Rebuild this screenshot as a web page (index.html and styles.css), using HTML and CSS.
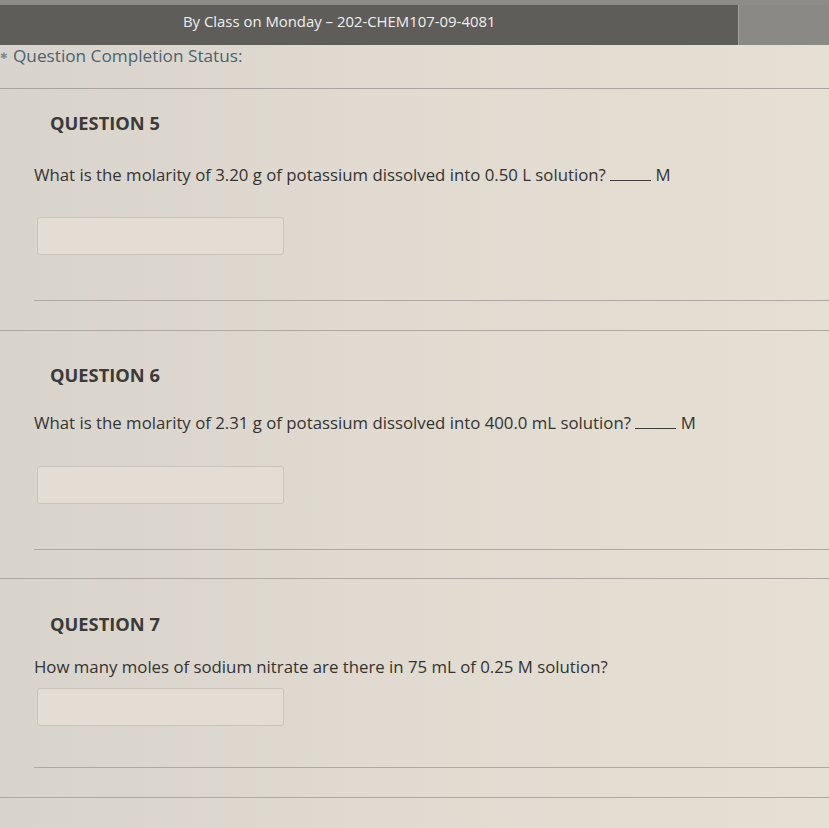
FILE: index.html
```html
<!DOCTYPE html>
<html>
<head>
<meta charset="utf-8">
<link rel="stylesheet" href="styles.css">
</head>
<body>
<div class="topstrip"></div>
<header class="bar">
  <div class="bar-main"><span class="bar-title">By Class on Monday – 202-CHEM107-09-4081</span></div>
  <div class="bar-side"></div>
</header>
<div class="status">
  <span class="status-icon">&#10033;</span>
  <span class="status-text">Question Completion Status:</span>
</div>
<main class="questions">
  <section class="question q5">
    <h2 class="q-title">QUESTION 5</h2>
    <p class="q-text">What is the molarity of 3.20 g of potassium dissolved into 0.50 L solution? <span class="blank"></span> M</p>
    <div class="answer"></div>
    <div class="inner-rule"></div>
  </section>
  <section class="question q6">
    <h2 class="q-title">QUESTION 6</h2>
    <p class="q-text">What is the molarity of 2.31 g of potassium dissolved into 400.0 mL solution? <span class="blank"></span> M</p>
    <div class="answer"></div>
    <div class="inner-rule"></div>
  </section>
  <section class="question q7">
    <h2 class="q-title">QUESTION 7</h2>
    <p class="q-text">How many moles of sodium nitrate are there in 75 mL of 0.25 M solution?</p>
    <div class="answer"></div>
    <div class="inner-rule"></div>
  </section>
</main>
</body>
</html>
```

FILE: styles.css
```css
html, body {
  margin: 0;
  padding: 0;
}
body {
  width: 829px;
  height: 828px;
  overflow: hidden;
  background: linear-gradient(90deg, #d8d3cc 0%, #e0dad0 45%, #e6dfd3 100%);
  font-family: "Open Sans", "Noto Sans", sans-serif;
  color: #353433;
}
.topstrip {
  height: 5px;
  background: #8e8c88;
}
.bar {
  display: flex;
  height: 40px;
}
.bar-main {
  width: 738px;
  background: #5e5d5a;
  display: flex;
  align-items: center;
}
.bar-title {
  margin-left: 183px;
  margin-top: -9px;
  color: #f1efec;
  font-size: 14.9px;
  font-weight: 500;
}
.bar-side {
  flex: 1;
  background: #8b8985;
  border-left: 1px solid #a3a19d;
}
.status {
  display: flex;
  align-items: flex-start;
  height: 43px;
  line-height: 22px;
  border-bottom: 1px solid #a8a49f;
}
.status-icon {
  font-size: 9px;
  color: #7e8a90;
  width: 13px;
}
.status-text {
  font-size: 17.2px;
  color: #4a6370;
}
.questions {
  display: flex;
  flex-direction: column;
}
.question {
  border-bottom: 1px solid #aeaaa3;
  padding-top: 33px;
  padding-bottom: 28px;
}
.q-title {
  margin: 0 0 0 50px;
  font-size: 18.3px;
  font-weight: 700;
  color: #3b3a39;
  line-height: 22px;
}
.q-text {
  margin: 26px 0 0 34px;
  font-size: 16.8px;
  line-height: 22px;
  color: #343332;
}
.blank {
  display: inline-block;
  width: 41px;
  border-bottom: 1px solid #3e3d3c;
}
.answer {
  margin: 32px 0 0 37px;
  width: 245px;
  height: 36px;
  border: 1px solid #c9c4bc;
  border-radius: 3px;
  background: #e3ddd4;
}
.inner-rule {
  margin: 45px 0 0 34px;
  border-top: 1px solid #aeaaa3;
}
.q5 {
  padding-top: 23px;
  padding-bottom: 29px;
}
.q5 .q-text {
  margin-top: 30px;
}
.q5 .answer {
  margin-top: 31px;
}
.q7 {
  padding-top: 34px;
  padding-bottom: 29px;
}
.q7 .q-text {
  margin-top: 21px;
}
.q7 .answer {
  margin-top: 10px;
}
.q7 .inner-rule {
  margin-top: 41px;
}
```
